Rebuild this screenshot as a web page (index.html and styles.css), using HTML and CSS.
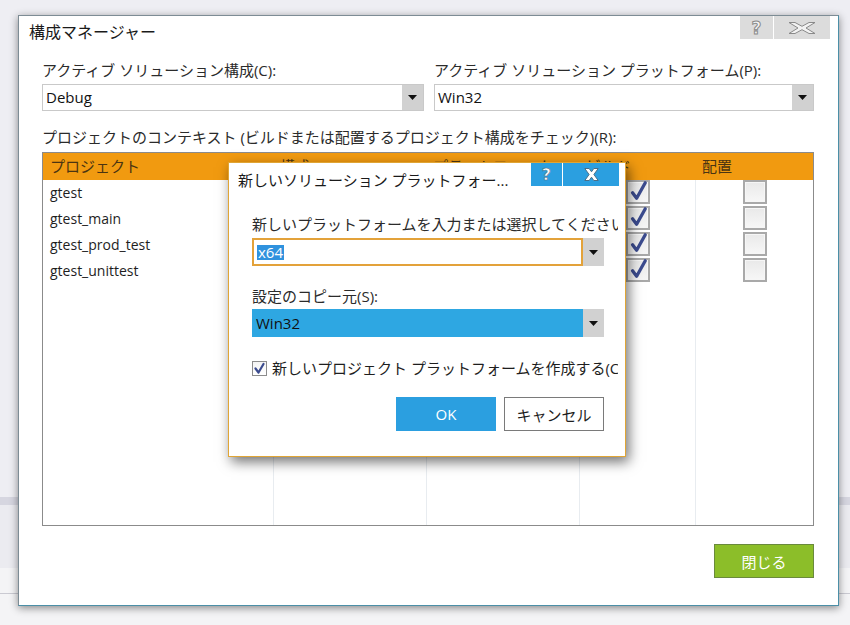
FILE: index.html
```html
<!DOCTYPE html>
<html lang="ja">
<head>
<meta charset="utf-8">
<title>構成マネージャー</title>
<link rel="stylesheet" href="styles.css">
</head>
<body>
<div class="window">
  <div class="titlebar">
    <div class="title">構成マネージャー</div>
    <div class="caption">
      <div class="cbtn help">?</div>
      <div class="cbtn close">
        <svg width="28" height="12" viewBox="0 0 28 12"><polygon points="1,0.5 7,0.5 14,4.3 21,0.5 27,0.5 18,6 27,11.5 21,11.5 14,7.7 7,11.5 1,11.5 10,6" fill="#f2f2f2" stroke="#8a8a8a" stroke-width="1"/></svg>
      </div>
    </div>
  </div>

  <div class="content">
    <div class="selectors">
      <div class="field">
        <div class="label">アクティブ ソリューション構成(C):</div>
        <div class="combo"><span class="value">Debug</span><span class="arrow"><svg width="9" height="5" viewBox="0 0 9 5"><polygon points="0,0 9,0 4.5,5" fill="#111"/></svg></span></div>
      </div>
      <div class="field">
        <div class="label">アクティブ ソリューション プラットフォーム(P):</div>
        <div class="combo"><span class="value">Win32</span><span class="arrow"><svg width="9" height="5" viewBox="0 0 9 5"><polygon points="0,0 9,0 4.5,5" fill="#111"/></svg></span></div>
      </div>
    </div>

    <div class="ctx-label">プロジェクトのコンテキスト (ビルドまたは配置するプロジェクト構成をチェック)(R):</div>

    <div class="proj-table">
      <div class="th">プロジェクト</div>
      <div class="th">構成</div>
      <div class="th">プラットフォーム</div>
      <div class="th">ビルド</div>
      <div class="th">配置</div>

      <div class="td name">gtest</div>
      <div class="td"></div>
      <div class="td"></div>
      <div class="td box-cell"><span class="tbox"><svg width="22" height="24" viewBox="0 0 22 24"><path d="M5 14 L9.5 20 L19 3" fill="none" stroke="#3b4b8e" stroke-width="3.6" stroke-linecap="round" stroke-linejoin="round"/></svg></span></div>
      <div class="td box-cell"><span class="tbox"></span></div>

      <div class="td name">gtest_main</div>
      <div class="td"></div>
      <div class="td"></div>
      <div class="td box-cell"><span class="tbox"><svg width="22" height="24" viewBox="0 0 22 24"><path d="M5 14 L9.5 20 L19 3" fill="none" stroke="#3b4b8e" stroke-width="3.6" stroke-linecap="round" stroke-linejoin="round"/></svg></span></div>
      <div class="td box-cell"><span class="tbox"></span></div>

      <div class="td name">gtest_prod_test</div>
      <div class="td"></div>
      <div class="td"></div>
      <div class="td box-cell"><span class="tbox"><svg width="22" height="24" viewBox="0 0 22 24"><path d="M5 14 L9.5 20 L19 3" fill="none" stroke="#3b4b8e" stroke-width="3.6" stroke-linecap="round" stroke-linejoin="round"/></svg></span></div>
      <div class="td box-cell"><span class="tbox"></span></div>

      <div class="td name">gtest_unittest</div>
      <div class="td"></div>
      <div class="td"></div>
      <div class="td box-cell"><span class="tbox"><svg width="22" height="24" viewBox="0 0 22 24"><path d="M5 14 L9.5 20 L19 3" fill="none" stroke="#3b4b8e" stroke-width="3.6" stroke-linecap="round" stroke-linejoin="round"/></svg></span></div>
      <div class="td box-cell"><span class="tbox"></span></div>

      <div class="td"></div>
      <div class="td"></div>
      <div class="td"></div>
      <div class="td"></div>
      <div class="td"></div>
    </div>

    <div class="footer">
      <button class="close-btn">閉じる</button>
    </div>
  </div>

  <div class="dialog">
    <div class="dlg-titlebar">
      <div class="dlg-title">新しいソリューション プラットフォー...</div>
      <div class="dlg-caption">
        <div class="dbtn dhelp">?</div>
        <div class="dbtn dclose">
          <svg width="15" height="13" viewBox="0 0 15 13"><polygon points="0.8,0.5 5.2,0.5 7.5,3.8 9.8,0.5 14.2,0.5 9.9,6.5 14.2,12.5 9.8,12.5 7.5,9.2 5.2,12.5 0.8,12.5 5.1,6.5" fill="#fff" stroke="#4b6f88" stroke-width="1"/></svg>
        </div>
      </div>
    </div>
    <div class="dlg-body">
      <div class="dlabel first">新しいプラットフォームを入力または選択してください(E):</div>
      <div class="dcombo">
        <div class="dfield edit"><span class="sel">x64</span></div>
        <span class="arrow"><svg width="9" height="5" viewBox="0 0 9 5"><polygon points="0,0 9,0 4.5,5" fill="#111"/></svg></span>
      </div>
      <div class="dlabel second">設定のコピー元(S):</div>
      <div class="dcombo copy">
        <div class="dfield filled">Win32</div>
        <span class="arrow"><svg width="9" height="5" viewBox="0 0 9 5"><polygon points="0,0 9,0 4.5,5" fill="#111"/></svg></span>
      </div>
      <div class="check-row">
        <span class="cbox"><svg width="13" height="13" viewBox="0 0 13 13"><path d="M2.5 6.5 L5.5 10.5 L10.5 2" fill="none" stroke="#3b4b8e" stroke-width="2.2" stroke-linecap="round" stroke-linejoin="round"/></svg></span>
        <span class="check-text">新しいプロジェクト プラットフォームを作成する(C)</span>
      </div>
      <div class="dlg-buttons">
        <button class="btn ok">OK</button>
        <button class="btn cancel">キャンセル</button>
      </div>
    </div>
  </div>
</div>
</body>
</html>
```

FILE: styles.css
```css
* {
  box-sizing: border-box;
}

html, body {
  margin: 0;
  padding: 0;
}

body {
  width: 850px;
  height: 625px;
  overflow: hidden;
  font-family: "Open Sans", "Noto Sans CJK JP", sans-serif;
  color: #1e1e1e;
  background:
    linear-gradient(to bottom,
      #eeeef3 0, #eeeef3 497px,
      #d6d6e0 497px, #d6d6e0 505px,
      #ebebf0 505px, #ebebf0 568px,
      #f4f4f6 568px, #f4f4f6 593px,
      #cacad2 593px, #cacad2 594px,
      #f4f4f6 594px);
}

.window {
  position: relative;
  margin: 15px 0 0 18px;
  width: 821px;
  height: 591px;
  background: #fff;
  border: 1px solid #7d8c95;
  border-right-color: #4b8fa7;
  border-bottom-color: #4b8fa7;
  box-shadow: 0 2px 8px rgba(0, 0, 0, 0.45);
  display: flex;
  flex-direction: column;
}

/* title bar */
.titlebar {
  height: 44px;
  display: flex;
  align-items: flex-start;
  padding: 0 8px 0 10px;
}

.title {
  padding-top: 6px;
  font-size: 16px;
  line-height: 20px;
  color: #1a1a1a;
}

.caption {
  margin-left: auto;
  display: flex;
  gap: 1px;
}

.cbtn {
  height: 23px;
  background: #dcdcdc;
  display: flex;
  align-items: center;
  justify-content: center;
}

.help {
  width: 33px;
  font-family: "DejaVu Sans", sans-serif;
  font-weight: bold;
  font-size: 17px;
  color: #f4f4f4;
  -webkit-text-stroke: 1px #8a8a8a;
}

.close {
  width: 56px;
}

/* content */
.content {
  padding: 0 24px 0 23px;
  display: flex;
  flex-direction: column;
}

.selectors {
  display: grid;
  grid-template-columns: 382px 380px;
  column-gap: 10px;
}

.label {
  font-size: 15px;
  line-height: 20px;
  color: #2b2b2b;
  white-space: nowrap;
}

.combo {
  margin-top: 4px;
  height: 27px;
  border: 1px solid #c9c9c9;
  display: flex;
  align-items: stretch;
}

.combo .value {
  flex: 1;
  padding-left: 3px;
  font-size: 15px;
  line-height: 25px;
  color: #111;
}

.arrow {
  width: 21px;
  background: #d1d1d1;
  display: flex;
  align-items: center;
  justify-content: center;
}

.ctx-label {
  margin-top: 16px;
  font-size: 15px;
  line-height: 20px;
  color: #2b2b2b;
  white-space: nowrap;
}

/* project table */
.proj-table {
  margin-top: 5px;
  height: 374px;
  border: 1px solid #8b8b8b;
  display: grid;
  grid-template-columns: 230px 153px 153px 116px 118px;
  grid-template-rows: 27px repeat(4, 26px) 1fr;
}

.th {
  background: #f19a10;
  color: #4a3412;
  font-size: 15px;
  line-height: 27px;
  padding-left: 7px;
  white-space: nowrap;
}

.td {
  border-left: 1px solid #e8ecf0;
}

.td:nth-child(5n + 1) {
  border-left: none;
}

.name {
  font-size: 14px;
  line-height: 26px;
  padding-left: 7px;
  color: #1e1e1e;
}

.box-cell {
  display: flex;
  justify-content: center;
  align-items: flex-start;
}

.tbox {
  width: 24px;
  height: 24px;
  border: 2px solid #a9a9a9;
  background: linear-gradient(#e9e9e9, #f7f7f7);
  box-shadow: inset 0 0 0 1px #f6f6f6;
  display: flex;
  align-items: flex-end;
  justify-content: center;
  overflow: visible;
}

.tbox svg {
  margin-bottom: -1px;
}

/* footer */
.footer {
  margin-top: 18px;
  display: flex;
  justify-content: flex-end;
}

.close-btn {
  width: 100px;
  height: 34px;
  background: #8cbe29;
  border: 1px solid #6a8a3c;
  color: #fff;
  font-family: "Open Sans", "Noto Sans CJK JP", sans-serif;
  font-size: 15px;
  padding: 0;
}

/* dialog */
.dialog {
  position: absolute;
  left: 209px;
  top: 146px;
  width: 398px;
  height: 295px;
  background: #fff;
  border: 1px solid #e0a535;
  box-shadow: 3px 5px 12px rgba(0, 0, 0, 0.55);
  display: flex;
  flex-direction: column;
}

.dlg-titlebar {
  height: 27px;
  display: flex;
  align-items: flex-start;
  padding: 0 6px 0 9px;
}

.dlg-title {
  padding-top: 7px;
  font-size: 15px;
  line-height: 20px;
  color: #1a1a1a;
  white-space: nowrap;
}

.dlg-caption {
  margin-left: auto;
  display: flex;
  gap: 1px;
}

.dbtn {
  height: 23px;
  background: #2b9fe0;
  display: flex;
  align-items: center;
  justify-content: center;
}

.dhelp {
  width: 31px;
  font-family: "DejaVu Sans", sans-serif;
  font-weight: bold;
  font-size: 16px;
  color: #fff;
  -webkit-text-stroke: 0.6px #4b6f88;
}

.dclose {
  width: 56px;
}

.dlg-body {
  padding: 0 7px 0 23px;
  display: flex;
  flex-direction: column;
}

.dlabel {
  font-size: 15px;
  line-height: 20px;
  color: #2b2b2b;
  white-space: nowrap;
  overflow: hidden;
}

.dlabel.first {
  margin-top: 24px;
}

.dlabel.second {
  margin-top: 20px;
}

.dcombo {
  margin-top: 4px;
  width: 352px;
  height: 28px;
  display: flex;
  align-items: stretch;
}

.dcombo.copy {
  margin-top: 3px;
}

.dfield {
  flex: 1;
  font-size: 15px;
}

.dfield.edit {
  border: 2px solid #e3a23a;
  padding-left: 3px;
  display: flex;
  align-items: center;
}

.sel {
  background: #2f92de;
  color: #fff;
  line-height: 15px;
  padding: 0 1px;
}

.dfield.filled {
  background: #2ea7e2;
  color: #111;
  line-height: 28px;
  padding-left: 4px;
}

.check-row {
  margin-top: 21px;
  height: 20px;
  display: flex;
  align-items: center;
  gap: 5px;
  white-space: nowrap;
  overflow: hidden;
}

.cbox {
  flex: none;
  width: 15px;
  height: 15px;
  border: 1px solid #8c8c8c;
  background: linear-gradient(#f4f4f4, #fff);
  display: flex;
  align-items: center;
  justify-content: center;
}

.check-text {
  font-size: 15px;
  line-height: 20px;
  color: #1e1e1e;
}

.dlg-buttons {
  margin-top: 19px;
  width: 352px;
  display: flex;
  justify-content: flex-end;
  gap: 8px;
}

.btn {
  width: 100px;
  height: 34px;
  padding: 0;
  font-family: "Open Sans", "Noto Sans CJK JP", sans-serif;
  font-size: 15px;
}

.btn.ok {
  background: #2b9fe0;
  border: 1px solid #2b9fe0;
  color: #fff;
}

.btn.cancel {
  background: #fff;
  border: 1px solid #7a7a7a;
  color: #1e1e1e;
}
```
